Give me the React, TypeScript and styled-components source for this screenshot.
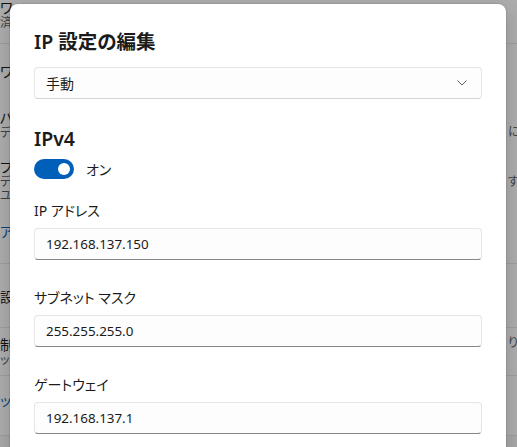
import React from "react";
import styled, { createGlobalStyle } from "styled-components";

const Global = createGlobalStyle`
  html, body { margin: 0; padding: 0; }
  body {
    width: 517px;
    height: 447px;
    overflow: hidden;
    background: #f3f3f3;
    font-family: "Noto Sans", "Noto Sans CJK JP", sans-serif;
    font-feature-settings: "palt";
    color: #1b1b1b;
  }
  #root { position: relative; width: 517px; height: 447px; overflow: hidden; }
`;

/* ---------- background settings page ---------- */
const Page = styled.div`
  width: 567px;
  display: flex;
  flex-direction: column;
  background: #f3f3f3;
`;

const Row = styled.div<{ $h: number; $line?: boolean }>`
  height: ${(p) => p.$h}px;
  display: grid;
  grid-template-columns: 1fr 60px;
  align-items: center;
  background: #fbfbfb;
  border-bottom: ${(p) => (p.$line ? "1px solid #e5e5e5" : "none")};
  box-sizing: border-box;
`;

const RowText = styled.div<{ $shift: number }>`
  display: flex;
  flex-direction: column;
  padding-top: ${(p) => Math.max(0, p.$shift * 2)}px;
  padding-bottom: ${(p) => Math.max(0, -p.$shift * 2)}px;
`;

const RowTitle = styled.div<{ $link?: boolean }>`
  font-size: 14px;
  line-height: 16px;
  color: ${(p) => (p.$link ? "#005fb8" : "#1b1b1b")};
  white-space: nowrap;
`;

const RowDesc = styled.div`
  font-size: 12px;
  line-height: 14px;
  color: #5d5d5d;
  white-space: nowrap;
`;

const RowAside = styled.div<{ $shift: number }>`
  font-size: 12px;
  color: #5d5d5d;
  white-space: nowrap;
  padding-left: 1px;
  padding-top: ${(p) => Math.max(0, p.$shift * 2)}px;
  padding-bottom: ${(p) => Math.max(0, -p.$shift * 2)}px;
`;

const Overlay = styled.div`
  position: absolute;
  inset: 0;
  background: rgba(0, 0, 0, 0.31);
`;

/* ---------- dialog ---------- */
const Dialog = styled.div`
  position: absolute;
  left: 10px;
  top: 4px;
  width: 496px;
  height: 470px;
  box-sizing: border-box;
  padding: 24px 24px 0 24px;
  background: #ffffff;
  border-radius: 8px;
  box-shadow: 0 0 0 1px rgba(0, 0, 0, 0.08), 0 6px 20px rgba(0, 0, 0, 0.18);
  display: flex;
  flex-direction: column;
`;

const Title = styled.h1`
  margin: 0;
  font-size: 19.5px;
  line-height: 28px;
  font-weight: 600;
  color: #1b1b1b;
`;

const Select = styled.div`
  margin-top: 11px;
  height: 32px;
  box-sizing: border-box;
  border: 1px solid #e5e5e5;
  border-bottom-color: #d4d4d4;
  border-radius: 4px;
  background: #fdfdfd;
  display: flex;
  align-items: center;
  justify-content: space-between;
  padding: 0 14px 0 11px;
  font-size: 14px;
`;

const SectionTitle = styled.h2`
  margin: 26px 0 0 0;
  font-size: 19.5px;
  line-height: 28px;
  font-weight: 600;
  color: #1b1b1b;
`;

const ToggleRow = styled.div`
  margin-top: 6px;
  height: 20px;
  display: flex;
  align-items: center;
  gap: 12px;
  font-size: 14px;
`;

const Track = styled.div<{ $on: boolean }>`
  width: 40px;
  height: 20px;
  box-sizing: border-box;
  border-radius: 10px;
  background: ${(p) => (p.$on ? "#005fb8" : "transparent")};
  display: flex;
  align-items: center;
  justify-content: ${(p) => (p.$on ? "flex-end" : "flex-start")};
  padding: 0 4px;
`;

const Knob = styled.div`
  width: 12px;
  height: 12px;
  border-radius: 50%;
  background: #ffffff;
`;

const Field = styled.div<{ $first?: boolean }>`
  margin-top: ${(p) => (p.$first ? 22 : 28)}px;
  display: flex;
  flex-direction: column;
  gap: 7px;
`;

const Label = styled.label`
  font-size: 14px;
  line-height: 20px;
  color: #1b1b1b;
`;

const TextBox = styled.input`
  height: 32px;
  box-sizing: border-box;
  border: 1px solid #e5e5e5;
  border-bottom: 1px solid #868686;
  border-radius: 4px;
  background: #fdfdfd;
  padding: 0 11px;
  font-family: inherit;
  font-size: 13.4px;
  color: #1b1b1b;
  outline: none;
`;

const Chevron = () => (
  <svg width="10" height="6" viewBox="0 0 10 6" fill="none">
    <path d="M0.8 0.8 L5 5 L9.2 0.8" stroke="#5f5f5f" strokeWidth="1" strokeLinecap="round" strokeLinejoin="round" />
  </svg>
);

const rows = [
  { h: 44, t: "ワー", d: "済み", line: true, s: 0, ts: -9 },
  { h: 56, t: "ワイ", d: "", s: 0, ts: 0 },
  { h: 50, t: "パブ", d: "デバ", a: "には", s: 6, ts: 0 },
  { h: 62, t: "プラ", d: "デバ", d2: "ユー", a: "する", s: 0, ts: 0 },
  { h: 52, t: "アク", d: "", link: true, line: true, s: 0, ts: -6 },
  { h: 64, t: "設定", d: "", line: true, s: 0, ts: 1 },
  { h: 48, t: "制限", d: "ット", a: "りま", line: true, s: -10, ts: 0 },
  { h: 60, t: "ッ", d: "", link: true, line: true, s: 0, ts: -5 },
];

export default function App() {
  return (
    <>
      <Global />
      <Page>
        {rows.map((r, i) => (
          <Row key={i} $h={r.h} $line={r.line}>
            <RowText $shift={r.ts}>
              <RowTitle $link={r.link}>{r.t}</RowTitle>
              {r.d && <RowDesc>{r.d}</RowDesc>}
              {r.d2 && <RowDesc>{r.d2}</RowDesc>}
            </RowText>
            <RowAside $shift={r.s}>{r.a ?? ""}</RowAside>
          </Row>
        ))}
      </Page>
      <Overlay />
      <Dialog>
        <Title>IP 設定の編集</Title>
        <Select>
          <span>手動</span>
          <Chevron />
        </Select>
        <SectionTitle>IPv4</SectionTitle>
        <ToggleRow>
          <Track $on>
            <Knob />
          </Track>
          <span>オン</span>
        </ToggleRow>
        <Field $first>
          <Label>IP アドレス</Label>
          <TextBox readOnly value="192.168.137.150" />
        </Field>
        <Field>
          <Label>サブネット マスク</Label>
          <TextBox readOnly value="255.255.255.0" />
        </Field>
        <Field>
          <Label>ゲートウェイ</Label>
          <TextBox readOnly value="192.168.137.1" />
        </Field>
      </Dialog>
    </>
  );
}
